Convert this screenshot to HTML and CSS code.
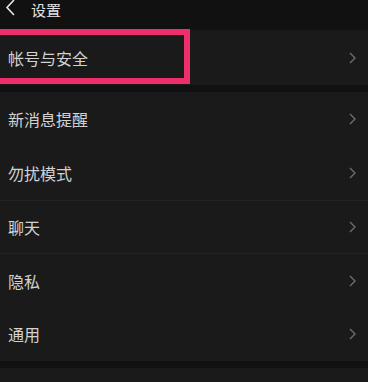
FILE: index.html
```html
<!DOCTYPE html>
<html lang="zh-CN">
  <head>
    <meta charset="UTF-8" />
    <meta name="viewport" content="width=device-width, initial-scale=1.0" />
    <title>设置</title>
    <link rel="stylesheet" href="styles.css">
  </head>
  <body>
    <div class="topbar">
      <svg class="back" width="12" height="18" viewBox="0 0 12 18">
        <path d="M10 1 L3 8.5 L10 16" fill="none" stroke="#e6e6e6" stroke-width="1.6" />
      </svg>
      <span class="title">设置</span>
    </div>

    <div class="group">
      <div class="row account">
        <span>帐号与安全</span>
        <svg class="arrow" width="7" height="12" viewBox="0 0 7 12"><path d="M1 1 L6 6 L1 11" fill="none" stroke="#6e6e6e" stroke-width="1.4" /></svg>
        <div class="mark"></div>
      </div>
    </div>

    <div class="group">
      <div class="row">
        <span>新消息提醒</span>
        <svg class="arrow" width="7" height="12" viewBox="0 0 7 12"><path d="M1 1 L6 6 L1 11" fill="none" stroke="#6e6e6e" stroke-width="1.4" /></svg>
      </div>
      <div class="row">
        <span>勿扰模式</span>
        <svg class="arrow" width="7" height="12" viewBox="0 0 7 12"><path d="M1 1 L6 6 L1 11" fill="none" stroke="#6e6e6e" stroke-width="1.4" /></svg>
      </div>
      <div class="row line">
        <span>聊天</span>
        <svg class="arrow" width="7" height="12" viewBox="0 0 7 12"><path d="M1 1 L6 6 L1 11" fill="none" stroke="#6e6e6e" stroke-width="1.4" /></svg>
      </div>
      <div class="row line">
        <span>隐私</span>
        <svg class="arrow" width="7" height="12" viewBox="0 0 7 12"><path d="M1 1 L6 6 L1 11" fill="none" stroke="#6e6e6e" stroke-width="1.4" /></svg>
      </div>
      <div class="row">
        <span>通用</span>
        <svg class="arrow" width="7" height="12" viewBox="0 0 7 12"><path d="M1 1 L6 6 L1 11" fill="none" stroke="#6e6e6e" stroke-width="1.4" /></svg>
      </div>
    </div>

    <div class="group">
      <div class="row"></div>
    </div>
  </body>
</html>
```

FILE: styles.css
```css
body {
  margin: 0;
  background-color: #111111;
  font-family: "Noto Sans CJK SC", "Noto Sans", sans-serif;
  color: #d2d2d2;
  overflow: hidden;
}
.topbar {
  height: 30px;
  box-sizing: border-box;
  padding: 1px 0 0 4px;
  display: flex;
  align-items: flex-start;
}
.back {
  margin-top: -2px;
}
.title {
  margin-left: 15px;
  font-size: 15px;
  line-height: 17px;
  color: #e2e2e2;
}
.group {
  background-color: #1a1a1a;
  margin-bottom: 7px;
}
.row {
  position: relative;
  height: 53.8px;
  box-sizing: border-box;
  display: flex;
  align-items: center;
  justify-content: space-between;
  padding: 0 12px 0 8px;
  font-size: 16px;
}
.row.account {
  height: 55px;
}
.row.line {
  border-top: 1px solid #222222;
}
.mark {
  position: absolute;
  left: -6px;
  top: -1px;
  width: 196px;
  height: 55px;
  box-sizing: border-box;
  border: 6px solid #ee2f6c;
}
```
